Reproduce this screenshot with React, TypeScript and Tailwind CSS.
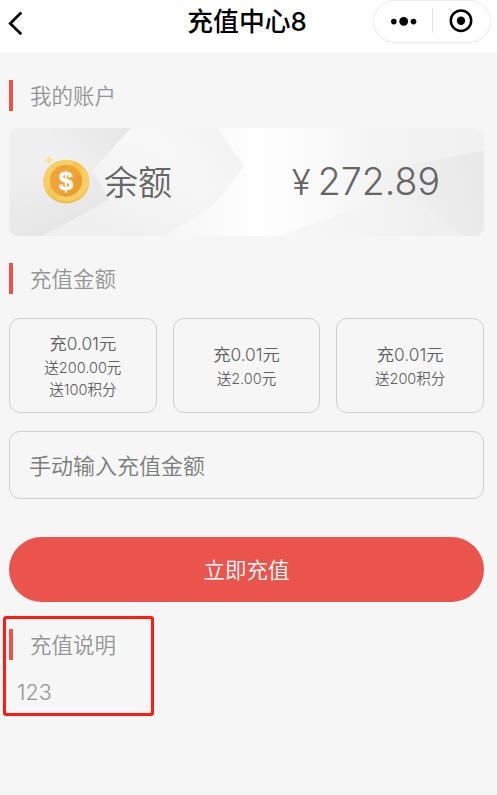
import React from 'react';

const options: { id: number; pay: string; gifts: string[] }[] = [
  { id: 1, pay: '充0.01元', gifts: ['送200.00元', '送100积分'] },
  { id: 2, pay: '充0.01元', gifts: ['送2.00元'] },
  { id: 3, pay: '充0.01元', gifts: ['送200积分'] },
];

function SectionTitle(props: { children: React.ReactNode }) {
  return (
    <h2 className="flex h-[31px] items-center border-l-4 border-[#ee524c] pt-[2px] pl-[17px] text-[21.5px] leading-none font-[350] text-[#949494]">
      {props.children}
    </h2>
  );
}

function NavBar() {
  return (
    <header className="relative flex h-[53px] justify-center bg-white">
      <svg className="absolute top-[10px] left-[7px] h-[27px] w-[17px]" viewBox="0 0 17 27" fill="none">
        <path d="M14.3 2.5 3.2 13.5 14.3 24.3" stroke="#000" strokeWidth="2.7" />
      </svg>
      <h1 className="h-[43px] pr-[3px] text-[25.8px] leading-[43px] font-medium text-black">充值中心8</h1>
      <div className="absolute top-0 right-[6px] h-[43px] w-[118px] rounded-full border border-[#ebebeb]">
        <svg className="h-full w-full" viewBox="0 0 116 41">
          <circle cx="19.8" cy="20.6" r="2.8" />
          <circle cx="29.7" cy="20.3" r="4.4" />
          <circle cx="39.5" cy="20.6" r="2.8" />
          <path d="M58.5 7v25" stroke="#e2e2e2" />
          <circle cx="87" cy="19.7" r="10.2" fill="none" stroke="#000" strokeWidth="2.5" />
          <circle cx="87" cy="19.7" r="4.2" />
        </svg>
      </div>
    </header>
  );
}

function CoinIcon() {
  return (
    <svg className="h-[50px] w-[48px] shrink-0" viewBox="0 0 48 50">
      <ellipse cx="24.3" cy="25.7" rx="23" ry="21.7" fill="#f1bd4b" />
      <ellipse cx="24.3" cy="24.4" rx="22.8" ry="20.6" fill="#f7cf65" />
      <path d="M5 35 33 5.6a22 22 0 0 1 9 8L14 43a22 22 0 0 1-9-8Z" fill="#f4c657" />
      <ellipse cx="24" cy="24.6" rx="16.2" ry="15.8" fill="#efa435" />
      <path d="M24 40.4a16 16 0 0 0 14.5-22.5L17 38.8a16 16 0 0 0 7 1.6Z" fill="#ed9e32" />
      <path d="M6.7-1 8 2.6l4 1.4-4 1.4L6.7 9 5.4 5.4 1.5 4l3.9-1.4Z" fill="#ffe07c" />
      <text
        x="24"
        y="34"
        textAnchor="middle"
        fill="#fff"
        stroke="#fff"
        strokeWidth=".4"
        className="font-['Liberation_Sans',sans-serif] text-[26px] font-bold"
      >
        $
      </text>
    </svg>
  );
}

function CardTexture() {
  return (
    <svg className="absolute inset-0 h-full w-full" viewBox="0 0 475 108" preserveAspectRatio="none">
      <defs>
        <linearGradient id="base" x1="0" x2="1">
          <stop offset="0" stopColor="#efefef" />
          <stop offset=".2" stopColor="#f1f1f1" />
          <stop offset=".45" stopColor="#fbfbfb" />
          <stop offset=".52" stopColor="#fefefe" />
          <stop offset=".64" stopColor="#fbfbfb" />
          <stop offset=".78" stopColor="#f3f3f3" />
          <stop offset="1" stopColor="#f1f1f1" />
        </linearGradient>
        <linearGradient id="corner" gradientUnits="userSpaceOnUse" x1="62" y1="42" x2="108" y2="0">
          <stop offset="0" stopColor="#e7e7e7" stopOpacity="0" />
          <stop offset="1" stopColor="#e7e7e7" />
        </linearGradient>
        <linearGradient id="shade" gradientUnits="userSpaceOnUse" x1="22" y1="40" x2="48" y2="98">
          <stop offset="0" stopColor="#e6e6e6" stopOpacity="0" />
          <stop offset="1" stopColor="#e6e6e6" />
        </linearGradient>
        <linearGradient id="band" gradientUnits="userSpaceOnUse" x1="110" y1="108" x2="150" y2="20">
          <stop offset="0" stopColor="#f0f0f0" />
          <stop offset="1" stopColor="#f8f8f8" />
        </linearGradient>
        <linearGradient id="facet" gradientUnits="userSpaceOnUse" x1="222" y1="14" x2="175" y2="45">
          <stop offset="0" stopColor="#f2f2f2" />
          <stop offset="1" stopColor="#f2f2f2" stopOpacity="0" />
        </linearGradient>
        <linearGradient id="wedge" gradientUnits="userSpaceOnUse" x1="365" y1="70" x2="475" y2="40">
          <stop offset="0" stopColor="#f3f3f3" />
          <stop offset="1" stopColor="#e8e8e8" />
        </linearGradient>
        <linearGradient id="floor" gradientUnits="userSpaceOnUse" x1="280" y1="0" x2="450" y2="0">
          <stop offset="0" stopColor="#f7f7f7" />
          <stop offset="1" stopColor="#efefef" />
        </linearGradient>
      </defs>
      <path d="M0 0h475v108H0z" fill="url(#base)" />
      <path d="M40 0h82L84 42 40 42Z" fill="url(#corner)" />
      <path d="M0 30 84 42 100 72 34 108H0Z" fill="url(#shade)" />
      <path d="M122 0h86l27 38-30 39-50 31H34l66-36-16-30Z" fill="url(#band)" />
      <path d="M122 0h86l27 38-30 39-50-20Z" fill="url(#facet)" />
      <path d="M365 43 475 23v85h-22l-48-37-52 7Z" fill="url(#wedge)" />
      <path d="M270 108 355 78l50-7 48 37Z" fill="url(#floor)" />
    </svg>
  );
}

export default function App() {
  return (
    <div className="min-h-[795px] w-full bg-[#f6f6f6] font-['Inter','Noto_Sans_CJK_SC',sans-serif]">
      <NavBar />
      <main className="pt-[27px] pr-[13px] pl-[9px]">
        <SectionTitle>我的账户</SectionTitle>
        <section className="relative mt-[17px] flex h-[108px] items-center overflow-hidden rounded-[10px]">
          <CardTexture />
          <div className="relative flex w-full items-center pr-[44px] pb-[3px] pl-[33px] text-[#666]">
            <CoinIcon />
            <span className="mt-[5px] ml-[14px] text-[34px] leading-none font-[350]">余额</span>
            <span className="mt-[3px] ml-auto flex items-center text-[37.5px] leading-none font-[350]">
              <span className="mr-[7px] text-[35px]">¥</span>
              <span>272.89</span>
            </span>
          </div>
        </section>

        <div className="mt-[27px]">
          <SectionTitle>充值金额</SectionTitle>
        </div>
        <ul className="mt-6 grid grid-cols-3 gap-4">
          {options.map((o) => (
            <li
              key={o.id}
              className="flex h-[95px] flex-col items-center justify-center rounded-[11px] border border-[#d0d0d0] text-[#606060]"
            >
              <p className="text-[17.3px] leading-[26px] font-[350]">{o.pay}</p>
              {o.gifts.map((g) => (
                <p key={g} className="text-[14.5px] leading-[22px] font-[350]">
                  {g}
                </p>
              ))}
            </li>
          ))}
        </ul>

        <input
          className="mt-[18px] block h-[68px] w-full rounded-[11px] border border-[#d0d0d0] bg-transparent pt-[2px] pr-5 pl-[19px] text-[22px] font-[350] outline-none placeholder:text-[#7c7c7c]"
          placeholder="手动输入充值金额"
        />
        <button className="mt-[38px] block h-[65px] w-full rounded-full bg-[#eb544d] pt-[2px] text-[21.5px] font-[350] text-white">
          立即充值
        </button>

        <section className="mt-[14px] -ml-[6px] h-[100px] w-[151px] rounded-[3px] border-3 border-[#ff1b10] pt-[10px] pl-[3px]">
          <SectionTitle>充值说明</SectionTitle>
          <p className="mt-[20px] pl-2 text-[21.5px] leading-6 font-[350] text-[#949494]">123</p>
        </section>
      </main>
    </div>
  );
}
